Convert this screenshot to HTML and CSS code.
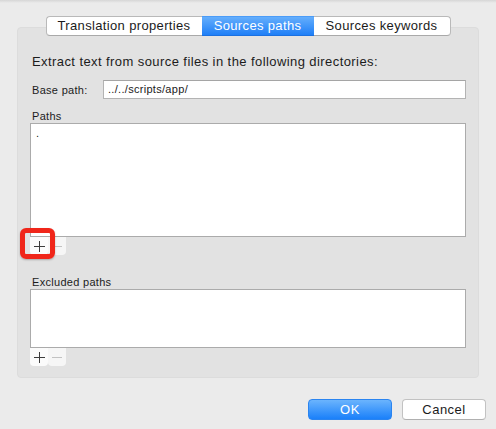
FILE: index.html
```html
<!DOCTYPE html>
<html>
<head>
<meta charset="utf-8">
<link rel="stylesheet" href="styles.css">
</head>
<body>
<div class="window">
  <div class="topline"></div>
  <div class="group">
    <div class="tabs">
      <div class="tab tab-first">Translation properties</div>
      <div class="tab tab-selected">Sources paths</div>
      <div class="tab tab-last">Sources keywords</div>
    </div>
    <p class="heading">Extract text from source files in the following directories:</p>
    <div class="row">
      <span class="label">Base path:</span>
      <div class="input">../../scripts/app/</div>
    </div>
    <div class="field-label">Paths</div>
    <div class="list list-paths"><span class="item">.</span></div>
    <div class="btnrow">
      <div class="sq sq-plus"><svg width="18" height="18" viewBox="0 0 18 18"><path d="M9 3.5V14.5M3.5 9H14.5" stroke="#3c3c3c" stroke-width="1" fill="none" shape-rendering="crispEdges"/></svg></div>
      <div class="sq sq-minus"><svg width="18" height="18" viewBox="0 0 18 18"><path d="M4 9H14" stroke="#c2c2c2" stroke-width="1" fill="none" shape-rendering="crispEdges"/></svg></div>
      <div class="highlight"></div>
    </div>
    <div class="field-label field-label-2">Excluded paths</div>
    <div class="list list-excluded"></div>
    <div class="btnrow">
      <div class="sq sq-plus"><svg width="18" height="18" viewBox="0 0 18 18"><path d="M9 3.5V14.5M3.5 9H14.5" stroke="#3c3c3c" stroke-width="1" fill="none" shape-rendering="crispEdges"/></svg></div>
      <div class="sq sq-minus"><svg width="18" height="18" viewBox="0 0 18 18"><path d="M4 9H14" stroke="#c2c2c2" stroke-width="1" fill="none" shape-rendering="crispEdges"/></svg></div>
    </div>
  </div>
  <div class="footer">
    <div class="button button-ok">OK</div>
    <div class="button button-cancel">Cancel</div>
  </div>
</div>
</body>
</html>
```

FILE: styles.css
```css
html, body {
  margin: 0;
  padding: 0;
}
body {
  width: 496px;
  height: 429px;
  background: #ebebeb;
  font-family: "Liberation Sans", Arial, sans-serif;
  color: #1a1a1a;
  overflow: hidden;
}
.window {
  display: flex;
  flex-direction: column;
}
.topline {
  height: 3px;
  background: linear-gradient(#d6d6d6, #ebebeb);
}
.group {
  margin: 24px 17px 0 17px;
  height: 351px;
  box-sizing: border-box;
  background: #e2e2e2;
  border: 1px solid #dcdcdc;
  border-radius: 4px;
  padding: 0 12px 0 12px;
  display: flex;
  flex-direction: column;
}
.tabs {
  display: flex;
  justify-content: center;
  margin-top: -12px;
  height: 20px;
}
.tab {
  height: 20px;
  box-sizing: border-box;
  background: #ffffff;
  border-top: 1px solid #b9b9b9;
  border-bottom: 1px solid #a9a9a9;
  font-size: 13px;
  letter-spacing: 0.35px;
  line-height: 18px;
  text-align: center;
  color: #1b1b1b;
}
.tab-first {
  width: 156px;
  border-left: 1px solid #b9b9b9;
  border-radius: 4px 0 0 4px;
}
.tab-selected {
  width: 112px;
  background: linear-gradient(#64aefc, #1f7ff7);
  border-top-color: #4b9cf8;
  border-bottom-color: #1b70e0;
  color: #ffffff;
}
.tab-last {
  width: 137px;
  border-right: 1px solid #b9b9b9;
  border-radius: 0 4px 4px 0;
}
.heading {
  margin: 18px 0 0 2px;
  font-size: 13px;
  letter-spacing: 0.42px;
  line-height: 16px;
  color: #1c1c1c;
}
.row {
  display: flex;
  align-items: center;
  margin-top: 10px;
  height: 19px;
}
.label {
  width: 71px;
  padding-left: 2px;
  font-size: 11px;
  letter-spacing: 0.3px;
  color: #1c1c1c;
}
.input {
  flex: 1;
  height: 19px;
  box-sizing: border-box;
  background: #ffffff;
  border: 1px solid #b3b3b3;
  border-top-color: #a5a5a5;
  font-size: 11px;
  letter-spacing: 0.3px;
  line-height: 17px;
  padding-left: 4px;
}
.field-label {
  margin-top: 10px;
  padding-left: 2px;
  font-size: 11px;
  letter-spacing: 0.3px;
  line-height: 14px;
  height: 14px;
  color: #1c1c1c;
}
.field-label-2 {
  margin-top: 20px;
}
.list {
  background: #ffffff;
  border: 1px solid #ababab;
  box-sizing: border-box;
}
.list-paths {
  height: 114px;
}
.list-excluded {
  height: 59px;
}
.item {
  display: block;
  font-size: 11px;
  line-height: 14px;
  padding: 2px 0 0 5px;
}
.btnrow {
  position: relative;
  display: flex;
  height: 18px;
}
.sq {
  width: 18px;
  height: 18px;
  background: #fbfbfb;
  border-radius: 0 0 4px 4px;
}
.sq svg {
  display: block;
}
.sq-minus {
  background: #f6f6f6;
}
.highlight {
  position: absolute;
  left: -10px;
  top: -9px;
  width: 35px;
  height: 31px;
  box-sizing: border-box;
  border: 5px solid #f0261a;
  border-radius: 6px;
  box-shadow: 0 1px 2px rgba(0,0,0,0.25);
}
.footer {
  display: flex;
  justify-content: flex-end;
  gap: 10px;
  margin-top: 21px;
  padding-right: 10px;
}
.button {
  width: 84px;
  height: 21px;
  box-sizing: border-box;
  border-radius: 4px;
  font-size: 13px;
  letter-spacing: 0.5px;
  line-height: 19px;
  text-align: center;
}
.button-ok {
  background: linear-gradient(#6bb4fd, #1a80fa);
  border: 1px solid #2a84f0;
  color: #ffffff;
}
.button-cancel {
  background: #ffffff;
  border: 1px solid #c2c2c2;
  border-bottom-color: #b0b0b0;
  color: #1b1b1b;
}
```
